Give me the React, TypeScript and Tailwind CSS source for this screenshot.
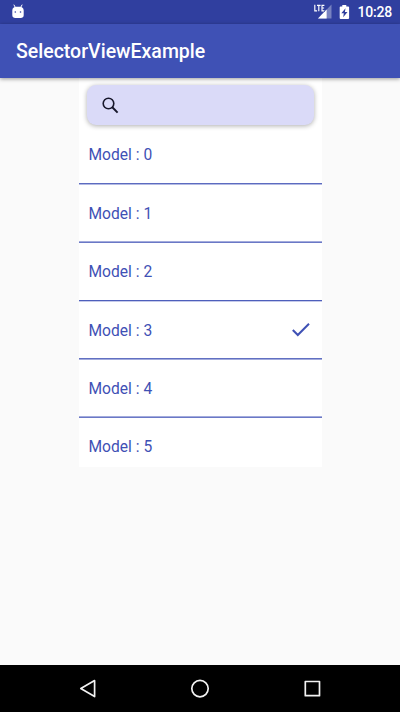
const rows = [
  { label: 'Model : 0', height: 'h-[59px]', pad: 'pt-[3px]', line: 'border-t-[#5c6bc0] border-b-[#b3bae3]' },
  { label: 'Model : 1', height: 'h-[58px]', pad: 'pt-[3px]', line: 'border-t-[#a3abdc] border-b-[#6a78c6]' },
  { label: 'Model : 2', height: 'h-[59px]', pad: 'pt-[3px]', line: 'border-t-[#4e5fbb] border-b-[#c5caea]' },
  { label: 'Model : 3', height: 'h-[58px]', pad: 'pt-[3px]', line: 'border-t-[#6170c2] border-b-[#a3abdc]' },
  { label: 'Model : 4', height: 'h-[58px]', pad: 'pt-[3px]', line: 'border-t-[#a3abdc] border-b-[#6a78c6]' },
  { label: 'Model : 5', height: 'h-[49px]', pad: 'pt-[11px]', line: '' },
];

function StatusBar() {
  return (
    <div className="flex h-6 items-center bg-[#303f9f] pr-[8px] pl-[11px] text-white">
      <svg width="14" height="16" viewBox="0 0 14 16" fill="#fff">
        <path d="M3 1 4.300 3.400M11 1 9.700 3.400" stroke="#fff" strokeWidth="1" strokeLinecap="round" />
        <path d="M1.300 6.400C1.300 4 3.200 2.800 5 2.800h4c1.800 0 3.700 1.200 3.700 3.600v4.800c0 1.800-1.300 2.800-2.900 2.800H4.200c-1.600 0-2.900-1-2.900-2.800z" />
        <circle cx="4.300" cy="8" r=".8" fill="#303f9f" />
        <circle cx="9.500" cy="8" r=".8" fill="#303f9f" />
      </svg>
      <svg className="ml-auto" width="19" height="18" viewBox="0 0 19 18">
        <path d="M18.500 1.600V15.600H5z" fill="#fff" opacity=".35" />
        <path d="M13.600 6.500v9.100H5z" fill="#fff" />
        <path d="M1 0h11v9H8L1 8z" fill="#303f9f" />
        <path d="M1.800 1.800v6h2.300M4 2.300h3.600M5.800 2.300v6M11.400 2.300H9v5.500h2.400M9 5h2.100" fill="none" stroke="#fff" strokeWidth="1.150" />
      </svg>
      <svg className="ml-[7px]" width="11" height="16" viewBox="0 0 11 16">
        <path d="M3.300 1h4v1.400h2c.4 0 .8.3.8.8v10.900c0 .5-.4.900-.9.900H1.600c-.5 0-.9-.4-.9-.9V3.200c0-.5.400-.8.800-.8h1.800z" fill="#fff" />
        <path d="M6.500 4.200 2.300 9.300h2.500l-.6 3.900 4.300-5.300H5.900z" fill="#303f9f" />
      </svg>
      <span className="ml-[7px] pt-px text-[14px] leading-[23px] font-medium tracking-[-0.2px]">10:28</span>
    </div>
  );
}

function NavigationBar() {
  return (
    <div className="flex h-[47px] items-center justify-center gap-[92px] bg-black">
      <svg width="20" height="20" viewBox="0 0 20 20" fill="none" stroke="#f2f2f2" strokeWidth="1.700" strokeLinejoin="round">
        <path d="M16.600 1.600v16L2.800 9.600z" />
      </svg>
      <svg width="20" height="20" viewBox="0 0 20 20" fill="none" stroke="#f2f2f2" strokeWidth="1.700">
        <circle cx="10" cy="9.600" r="8.200" />
      </svg>
      <svg width="20" height="20" viewBox="0 0 20 20" fill="none" stroke="#f2f2f2" strokeWidth="1.700" strokeLinejoin="round">
        <path d="M3.300 2.500h14.200v14.200H3.300z" />
      </svg>
    </div>
  );
}

export default function App() {
  return (
    <div className="flex h-[712px] w-[400px] flex-col overflow-hidden bg-[#fafafa] font-[Roboto,sans-serif]">
      <StatusBar />
      <header className="z-10 flex h-[54px] shrink-0 items-center bg-[#3f51b5] pt-[2px] pl-4 text-[19.500px] font-medium text-white shadow-[0_1px_4px_rgba(0,0,0,0.4)]">
        SelectorViewExample
      </header>
      <main className="min-h-0 flex-1">
        <section className="ml-[79px] h-[389px] w-[242.500px] bg-white pt-[7px]">
          <div className="ml-2 flex h-10 w-[227px] items-center rounded-[9px] bg-[#dadaf8] pl-[14.500px] shadow-[0_1px_5px_rgba(0,0,0,0.32)]">
            <svg width="18" height="18" viewBox="0 0 18 18" fill="none" stroke="#17172b" strokeWidth="1.600">
              <circle cx="6.500" cy="7.500" r="5.300" />
              <path d="M10.300 11.300 15.600 16.600" strokeWidth="2" />
            </svg>
          </div>
          <ul className="mt-px">
            {rows.map((row, i) => (
              <li key={row.label} className={`flex flex-col ${row.height}`}>
                <div className={`flex flex-1 items-center pr-[11px] pl-[9.500px] text-[15.600px] text-[#3f51b5] ${row.pad}`}>
                  <span>{row.label}</span>
                  {i === 3 && (
                    <svg className="mb-[3px] ml-auto" width="20" height="16" viewBox="0 0 20 16" fill="none" stroke="#3f51b5" strokeWidth="2">
                      <path d="m1.800 8 5 5L18 1.700" />
                    </svg>
                  )}
                </div>
                {row.line && <div className={`h-0.5 shrink-0 border-y ${row.line}`} />}
              </li>
            ))}
          </ul>
        </section>
      </main>
      <NavigationBar />
    </div>
  );
}
